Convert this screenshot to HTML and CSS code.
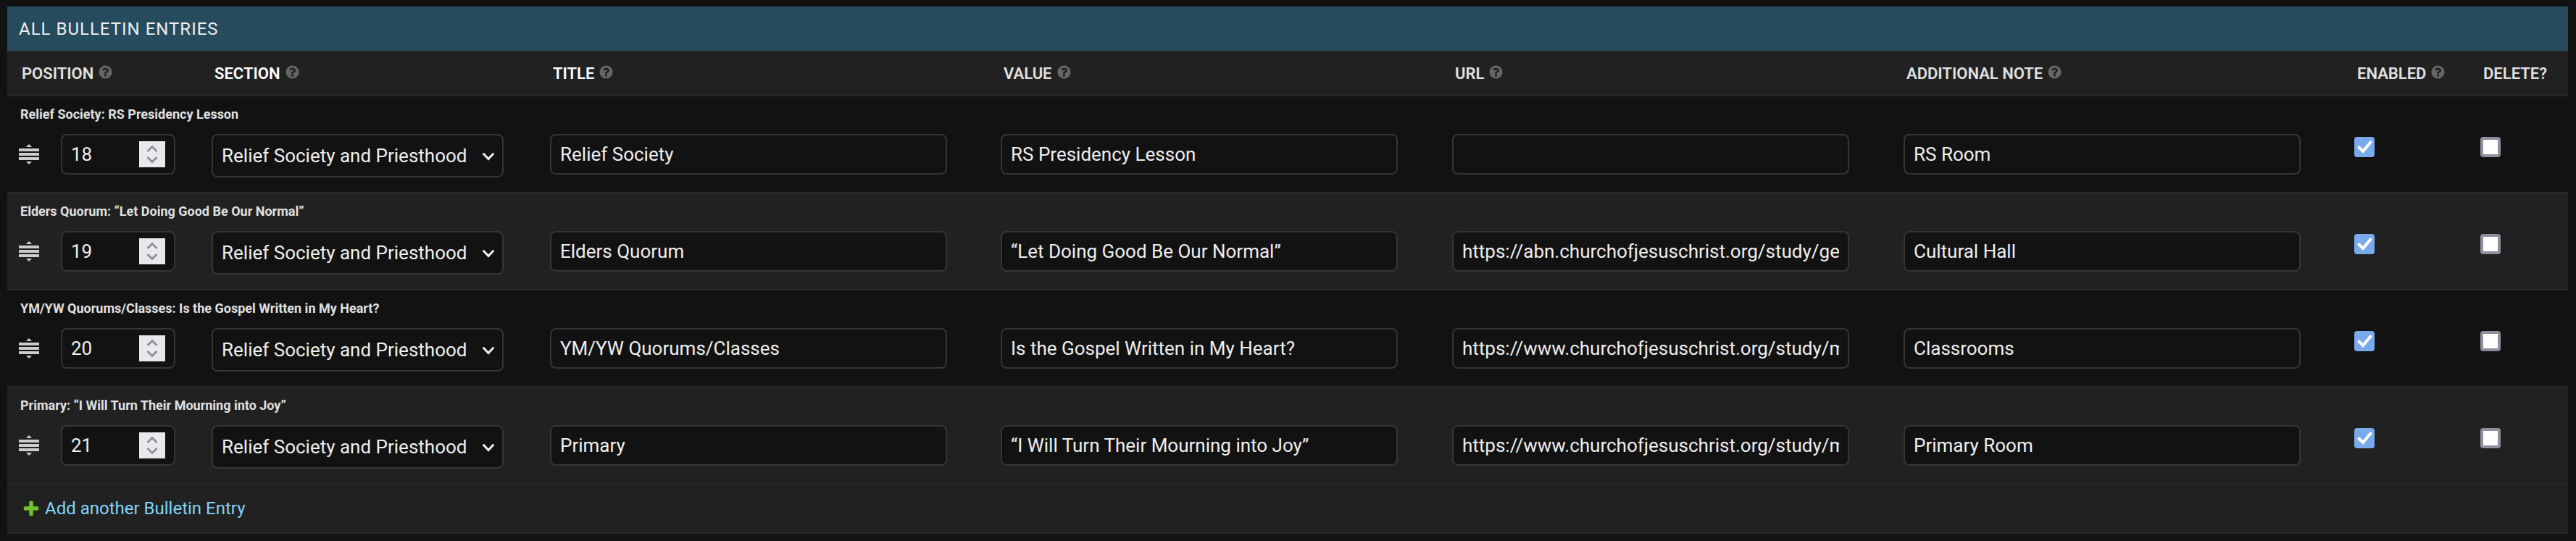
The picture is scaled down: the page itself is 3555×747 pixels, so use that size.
FILE: index.html
```
<!DOCTYPE html>
<html lang="en">
<head>
<meta charset="utf-8">
<title>All Bulletin Entries</title>
<link rel="stylesheet" href="styles.css">
</head>
<body>
<svg class="defs" width="0" height="0">
  <symbol id="help" viewBox="0 0 1792 1792"><path d="M1024 1376v-192q0-14-9-23t-23-9h-192q-14 0-23 9t-9 23v192q0 14 9 23t23 9h192q14 0 23-9t9-23zm256-672q0-88-55.500-163t-138.500-116-170-41q-243 0-371 213-15 24 8 42l132 100q7 6 19 6 16 0 25-12 53-68 86-92 34-24 86-24 48 0 85.500 26t37.500 59q0 38-20 61t-68 45q-63 28-115.500 86.500t-52.500 125.500v36q0 14 9 23t23 9h192q14 0 23-9t9-23q0-19 21.500-49.500t54.500-49.500q32-18 49-28.500t46-35 44.500-48 28-60.500 12.500-81zm384 192q0 209-103 385.500t-279.500 279.500-385.500 103-385.500-103-279.500-279.500-103-385.500 103-385.500 279.500-279.500 385.500-103 385.500 103 279.500 279.500 103 385.500z"/></symbol>
  <symbol id="drag" viewBox="0 0 28 28"><path d="M14 0l4 4h-8zM0 6h28v4H0zM0 12h28v4H0zM0 18h28v4H0zM14 28l4-4h-8z"/></symbol>
  <symbol id="spin" viewBox="0 0 36 36"><path d="M11.500 14l6.500-6.500 6.500 6.500M11.500 22l6.500 6.500 6.500-6.500"/></symbol>
  <symbol id="chev" viewBox="0 0 16 14"><path d="M1.500 2.500l6.500 7 6.500-7"/></symbol>
  <symbol id="check" viewBox="0 0 28 28"><path d="M6.500 14.500l5.500 5.500L22.500 7.500"/></symbol>
  <symbol id="plus" viewBox="0 0 1792 1792"><path d="M1600 796v192q0 40-28 68t-68 28h-416v416q0 40-28 68t-68 28h-192q-40 0-68-28t-28-68v-416h-416q-40 0-68-28t-28-68v-192q0-40 28-68t68-28h416v-416q0-40 28-68t68-28h192q40 0 68 28t28 68v416h416q40 0 68 28t28 68z"/></symbol>
</svg>
<main class="panel">
  <h2 class="caption">All Bulletin Entries</h2>
  <div class="row head">
    <div>Position<svg class="help"><use href="#help"/></svg></div>
    <div class="required">Section<svg class="help"><use href="#help"/></svg></div>
    <div class="required">Title<svg class="help"><use href="#help"/></svg></div>
    <div>Value<svg class="help"><use href="#help"/></svg></div>
    <div>URL<svg class="help"><use href="#help"/></svg></div>
    <div>Additional note<svg class="help"><use href="#help"/></svg></div>
    <div>Enabled<svg class="help"><use href="#help"/></svg></div>
    <div>Delete?</div>
  </div>
  <section class="entry">
    <p class="original">Relief Society: RS Presidency Lesson</p>
    <div class="row">
      <div class="position"><svg class="drag"><use href="#drag"/></svg><div class="field number">18<svg class="spin"><use href="#spin"/></svg></div></div>
      <div class="field select">Relief Society and Priesthood<svg class="chev"><use href="#chev"/></svg></div>
      <div class="field"><span>Relief Society</span></div>
      <div class="field"><span>RS Presidency Lesson</span></div>
      <div class="field"><span></span></div>
      <div class="field"><span>RS Room</span></div>
      <div class="box checked"><svg><use href="#check"/></svg></div>
      <div class="box"></div>
    </div>
  </section>
  <section class="entry alt">
    <p class="original">Elders Quorum: “Let Doing Good Be Our Normal”</p>
    <div class="row">
      <div class="position"><svg class="drag"><use href="#drag"/></svg><div class="field number">19<svg class="spin"><use href="#spin"/></svg></div></div>
      <div class="field select">Relief Society and Priesthood<svg class="chev"><use href="#chev"/></svg></div>
      <div class="field"><span>Elders Quorum</span></div>
      <div class="field"><span>“Let Doing Good Be Our Normal”</span></div>
      <div class="field"><span>https://abn.churchofjesuschrist.org/study/ge</span></div>
      <div class="field"><span>Cultural Hall</span></div>
      <div class="box checked"><svg><use href="#check"/></svg></div>
      <div class="box"></div>
    </div>
  </section>
  <section class="entry">
    <p class="original">YM/YW Quorums/Classes: Is the Gospel Written in My Heart?</p>
    <div class="row">
      <div class="position"><svg class="drag"><use href="#drag"/></svg><div class="field number">20<svg class="spin"><use href="#spin"/></svg></div></div>
      <div class="field select">Relief Society and Priesthood<svg class="chev"><use href="#chev"/></svg></div>
      <div class="field"><span>YM/YW Quorums/Classes</span></div>
      <div class="field"><span>Is the Gospel Written in My Heart?</span></div>
      <div class="field"><span>https://www.churchofjesuschrist.org/study/m</span></div>
      <div class="field"><span>Classrooms</span></div>
      <div class="box checked"><svg><use href="#check"/></svg></div>
      <div class="box"></div>
    </div>
  </section>
  <section class="entry alt">
    <p class="original">Primary: “I Will Turn Their Mourning into Joy”</p>
    <div class="row">
      <div class="position"><svg class="drag"><use href="#drag"/></svg><div class="field number">21<svg class="spin"><use href="#spin"/></svg></div></div>
      <div class="field select">Relief Society and Priesthood<svg class="chev"><use href="#chev"/></svg></div>
      <div class="field"><span>Primary</span></div>
      <div class="field"><span>“I Will Turn Their Mourning into Joy”</span></div>
      <div class="field"><span>https://www.churchofjesuschrist.org/study/m</span></div>
      <div class="field"><span>Primary Room</span></div>
      <div class="box checked"><svg><use href="#check"/></svg></div>
      <div class="box"></div>
    </div>
  </section>
  <footer class="add"><svg class="plus"><use href="#plus"/></svg><a>Add another Bulletin Entry</a></footer>
</main>
</body>
</html>
```
FILE: styles.css
```
* { box-sizing: border-box; }
body { margin: 0; padding: 9px 11px 11px 10px; background: #121212; color: #eee; font-family: Roboto, "Liberation Sans", sans-serif; }
.defs { display: block; }
.panel { height: 727px; }
.caption { margin: 0; height: 61px; padding: 0 16px; background: #264b5d; color: #eee; font-size: 24px; font-weight: 400; line-height: 63px; letter-spacing: 1px; text-transform: uppercase; }
.row { display: grid; grid-template-columns: 282px 467px 622px 623px 623px 622px 174px 1fr; align-items: start; }
.head { height: 63px; border-top: 2px solid #282828; border-bottom: 2px solid #282828; background: #212121; color: #e0e0e0; font-size: 22px; font-weight: 600; line-height: 59px; text-transform: uppercase; }
.head > div { padding-left: 4px; display: flex; }
.head > div:first-child { padding-left: 20px; }
.head .required { color: #fff; }
.help { width: 21px; height: 21px; margin: 17px 0 0 6px; fill: #666; }
.entry { height: 134px; padding-top: 14px; border-top: 2px solid #282828; background: #121212; }
.head + .entry { height: 132px; padding-top: 14px; border-top: 0; }
.alt { background: #212121; }
.original { margin: 0 0 14px; padding-left: 18px; height: 24px; font-size: 18px; font-weight: 700; line-height: 22px; color: #e0e0e0; }
.position { display: flex; padding-left: 16px; }
.drag { width: 28px; height: 28px; margin: 14px 30px 0 0; fill: #ccc; }
.field { width: 548px; height: 56px; padding: 0 12px; border: 2px solid #353535; border-radius: 8px; background: #121212; color: #eee; font-size: 26px; line-height: 53px; white-space: nowrap; }
.field span { display: block; height: 52px; overflow: hidden; }
.number { display: flex; justify-content: space-between; width: 158px; padding-left: 12px; }
.spin { width: 36px; height: 36px; margin-top: 8px; background: #e9e9ed; fill: none; stroke: #8f8f9d; stroke-width: 3; }
.select { display: flex; justify-content: space-between; width: 403px; height: 60px; padding: 0 11px 0 12px; line-height: 56px; }
.chev { width: 16px; height: 14px; margin-top: 23px; fill: none; stroke: #eee; stroke-width: 3; stroke-linecap: round; }
.box { width: 28px; height: 28px; margin-top: 4px; border: 4px solid #8f8f9d; border-radius: 4px; background: #fff; }
.checked { border: 0; background: #79aaec; }
.box svg { display: block; width: 28px; height: 28px; fill: none; stroke: #fff; stroke-width: 4; stroke-linecap: round; }
.add { display: flex; height: 70px; padding-left: 20px; border-top: 2px solid #282828; border-bottom: 2px solid #282828; background: #212121; color: #81d4fa; font-size: 24px; line-height: 67px; }
.plus { width: 26px; height: 26px; margin: 20px 6px 0 0; fill: #70bf2b; }
```
